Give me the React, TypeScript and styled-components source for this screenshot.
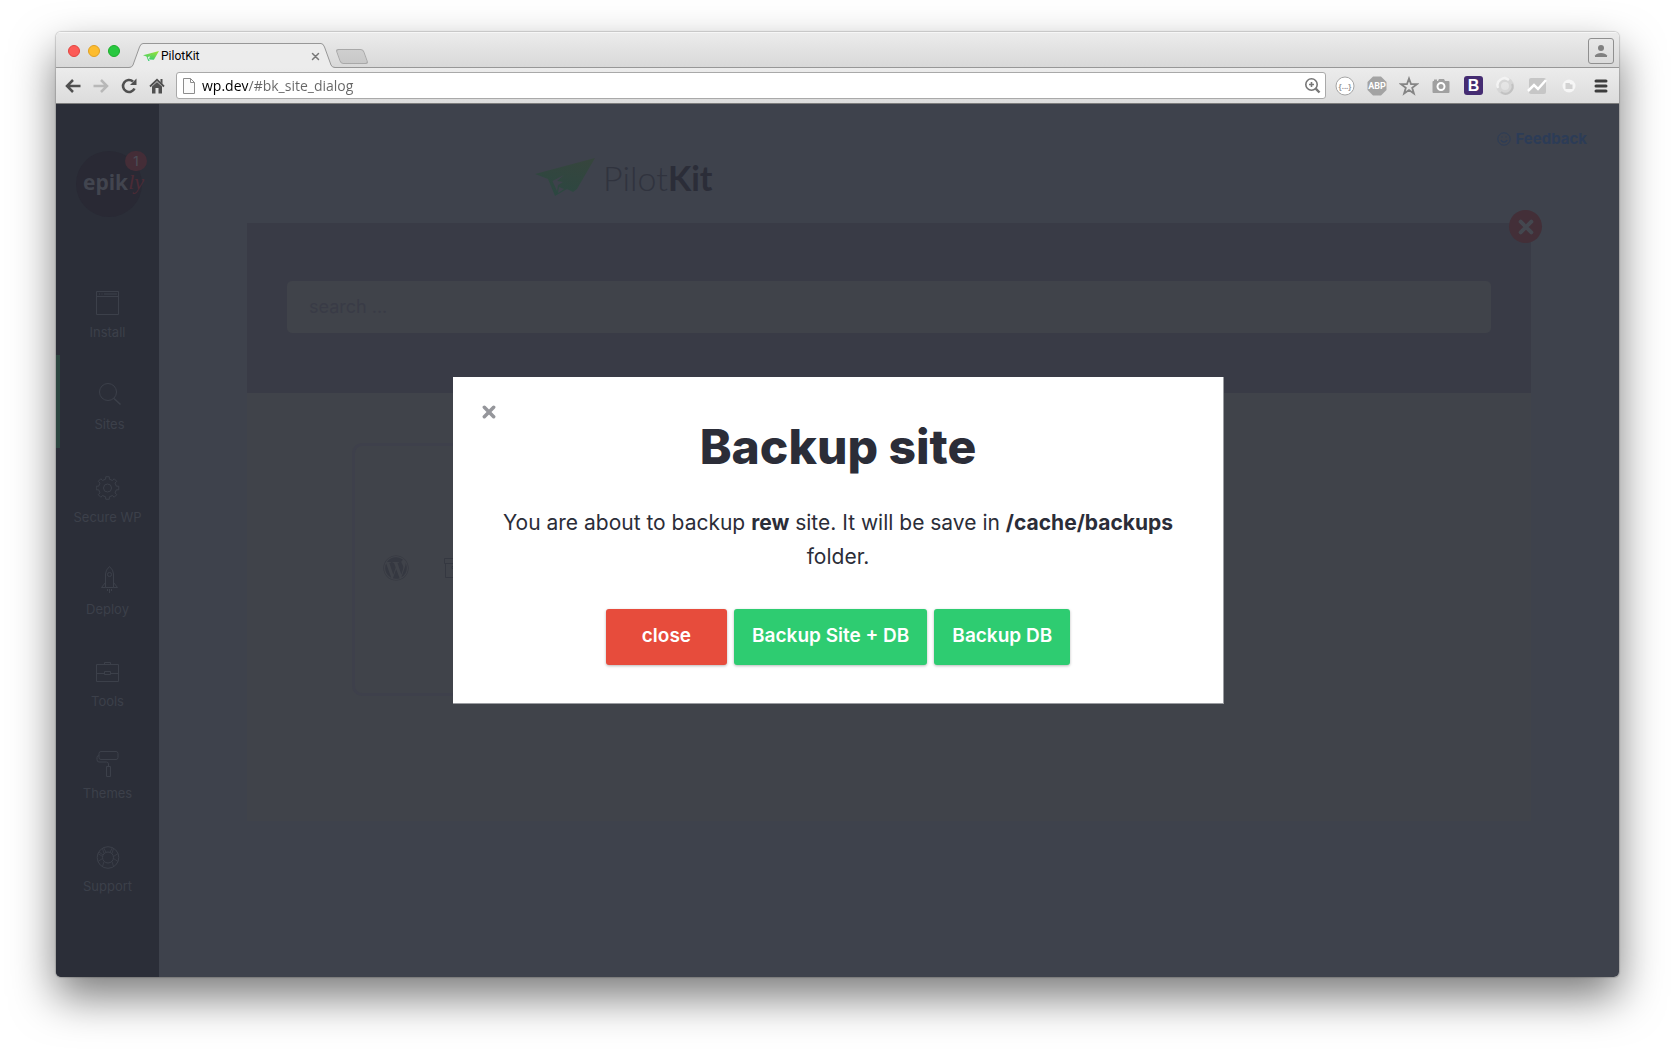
import React from "react";
import styled, { createGlobalStyle, css } from "styled-components";
import { FaWordpress } from "react-icons/fa";

const sans = `Inter, "Liberation Sans", sans-serif`;
const chrome = `Roboto, "Noto Sans", sans-serif`;

const GlobalStyle = createGlobalStyle`
  * { box-sizing: border-box; }
  body { margin: 0; background: #fff; font-family: ${sans}; }
  button { font: inherit; border: 0; padding: 0; background: none; cursor: pointer; }
  svg { display: block; flex: none; }
`;

const Desktop = styled.div`
  min-height: 100vh;
  padding: 32px 56px 80px;
  display: flex;
  flex-direction: column;
  overflow: hidden;
`;

const Window = styled.div`
  flex: 1;
  display: flex;
  flex-direction: column;
  border-radius: 5px;
  overflow: hidden;
  box-shadow: 0 0 1px 1px rgba(0, 0, 0, 0.16), 0 20px 44px rgba(0, 0, 0, 0.52);
`;

/* Browser chrome */

const TabStrip = styled.header`
  height: 36px;
  display: flex;
  align-items: flex-end;
  padding: 0 5px 0 12px;
  background: linear-gradient(#ececec, #d8d8d8);
  box-shadow: inset 0 1px 0 #f6f6f6, inset 0 -1px 0 #979797;
`;

const Lights = styled.div`
  display: flex;
  align-self: center;
  gap: 8px;
  padding-top: 2px;
  margin-right: 9px;
`;

const Light = styled.button<{ $fill: string; $edge: string }>`
  width: 12px;
  height: 12px;
  border-radius: 50%;
  background: ${(p) => p.$fill};
  border: 1px solid ${(p) => p.$edge};
`;

const Tab = styled.div`
  display: flex;
  height: 25px;
`;

const TabBody = styled.div`
  width: 178px;
  display: flex;
  align-items: center;
  gap: 2px;
  background: #ececec;
  border-top: 1px solid #979797;
  font: 400 12px/14px ${chrome};
  color: #000;
`;

const TabTitle = styled.span`
  flex: 1;
`;

const TabClose = styled.button`
  width: 12px;
  height: 12px;
  display: grid;
  place-items: center;
`;

const NewTab = styled.button`
  width: 28px;
  height: 15px;
  margin: 0 auto 4px 3px;
  transform: skewX(20deg);
  border: 1px solid #a8a8a8;
  border-radius: 3px;
  background: linear-gradient(#cfcfcf, #c8c8c8);
`;

const Profile = styled.button`
  width: 26px;
  height: 26px;
  margin-bottom: 4px;
  display: grid;
  place-items: center;
  border: 1px solid #8f8f8f;
  border-radius: 3px;
`;

const Toolbar = styled.nav`
  height: 36px;
  display: flex;
  align-items: center;
  padding: 0 2px 0 3px;
  background: linear-gradient(#ececec, #dcdcdc);
  border-bottom: 1px solid #7d7d7d;
`;

const ToolButton = styled.button<{ $wide?: boolean }>`
  width: ${(p) => (p.$wide ? 32 : 28)}px;
  height: 28px;
  display: grid;
  place-items: center;
  flex: none;
`;

const AddressBar = styled.label`
  flex: 1;
  height: 27px;
  margin: 0 3px 0 5px;
  padding: 0 4px 0 6px;
  display: flex;
  align-items: center;
  gap: 7px;
  background: #fff;
  border: 1px solid #a9a9a9;
  border-radius: 3px;
`;

const Address = styled.input`
  flex: 1;
  min-width: 0;
  height: 20px;
  padding: 0;
  border: 0;
  outline: 0;
  font: 14px/20px "Open Sans", "Noto Sans", sans-serif;
  color: transparent;
  background: linear-gradient(90deg, #000 46px, #666 46px);
  background-clip: text;
  -webkit-background-clip: text;
`;

/* Page */

const Page = styled.div`
  position: relative;
  flex: 1;
  display: flex;
  background: #3e424c;
`;

const Sidebar = styled.aside`
  width: 103px;
  flex: none;
  background: #2b2e38;
`;

const Avatar = styled.div`
  position: relative;
  width: 66px;
  height: 66px;
  margin: 47px auto 46px 20px;
  border-radius: 50%;
  background: #292934;
  display: flex;
  align-items: center;
  padding: 0 0 4px 7px;
  font: 700 21px/30px "Open Sans", sans-serif;
  color: #42454f;
`;

const Script = styled.i`
  font: italic 22px/30px "Liberation Serif", serif;
  color: #4b2b36;
`;

const Badge = styled.span`
  position: absolute;
  top: 0;
  right: -5px;
  width: 22px;
  height: 20px;
  border-radius: 10px;
  background: #442d37;
  color: #4a4b55;
  font: 500 13px/20px ${sans};
  text-align: center;
`;

const Nav = styled.nav`
  height: 646px;
  display: flex;
  flex-direction: column;
`;

const NavItem = styled.a<{ $active?: boolean }>`
  flex: 1;
  padding: 24px 4px 0 0;
  border-left: 4px solid transparent;
  display: flex;
  flex-direction: column;
  align-items: center;
  gap: 6px;
  color: #3c404a;
  font: 400 13px/18px ${sans};
  text-decoration: none;
  ${(p) =>
    p.$active &&
    css`
      border-color: #2b453f;
      padding-right: 0;
    `}
`;

const Main = styled.main`
  flex: 1;
  min-width: 0;
  padding: 17px 88px 0;
  display: flex;
  flex-direction: column;
`;

const Feedback = styled.a`
  align-self: flex-end;
  margin-right: -56px;
  display: flex;
  align-items: center;
  gap: 4px;
  height: 36px;
  color: #2c3c57;
  font: 700 15px/20px ${sans};
  text-decoration: none;
`;

const Brand = styled.div`
  height: 66px;
  padding: 1px 0 0 288px;
  display: flex;
  align-items: flex-start;
  gap: 8px;
  font: 300 34px/40px Lato, sans-serif;
  color: #30333e;

  b {
    font-weight: 700;
    color: #2b2d38;
  }
`;

const Panel = styled.section`
  position: relative;
  min-height: 598px;
  background: #40434a;
`;

const PanelHead = styled.div`
  height: 170px;
  padding: 58px 40px 0;
  background: #393b46;
`;

const Search = styled.input`
  width: 100%;
  height: 52px;
  padding: 0 22px 2px;
  border: 0;
  border-radius: 5px;
  background: #40434a;
  font: 400 18px/24px ${sans};
  color: #3a3b46;

  &::placeholder {
    color: #393b46;
    opacity: 1;
  }
`;

const PanelClose = styled.button`
  position: absolute;
  top: -13px;
  right: -11px;
  width: 33px;
  height: 33px;
  border-radius: 50%;
  background: #432f38;
  display: grid;
  place-items: center;
`;

const SiteCard = styled.article`
  width: 360px;
  height: 253px;
  margin: 50px 0 0 105px;
  padding: 0 28px 4px;
  border: 3px solid #3e404b;
  border-radius: 10px;
  display: flex;
  align-items: center;
  gap: 35px;
  color: #353841;
`;

/* Dialog */

const DialogLayer = styled.div`
  position: absolute;
  inset: 0;
  display: flex;
  align-items: center;
  justify-content: center;
`;

const Dialog = styled.div`
  position: relative;
  width: 771px;
  max-width: 92%;
  margin-left: 2px;
  padding: 40px 40px 38px;
  background: #fff;
  border: solid #9a9ca0;
  border-width: 0 1px 1px 0;
  color: #2b2d38;
  text-align: center;
`;

const DialogClose = styled.button`
  position: absolute;
  top: 25px;
  left: 26px;
  width: 20px;
  height: 20px;
  display: grid;
  place-items: center;
`;

const Title = styled.h1`
  margin: 0 0 29px;
  font: 800 48px/60px ${sans};
`;

const Message = styled.p`
  margin: 0 0 35px;
  font: 400 21px/34px ${sans};
`;

const Actions = styled.div`
  display: flex;
  justify-content: center;
  gap: 7px;
`;

const Action = styled.button<{ $danger?: boolean }>`
  height: 56px;
  padding: 0 ${(p) => (p.$danger ? 36 : 18)}px 2px;
  border-radius: 3px;
  background: ${(p) => (p.$danger ? "#e74c3c" : "#2ecc71")};
  box-shadow: 0 1px 3px rgba(0, 0, 0, 0.28);
  color: #fff;
  font: 600 19px/24px ${sans};
`;

const Cross = ({ size, width, color }: { size: number; width: number; color: string }) => (
  <svg width={size} height={size} viewBox="0 0 12 12" fill="none" stroke={color} strokeWidth={width} strokeLinecap="round">
    <path d="M2 2l8 8M10 2l-8 8" />
  </svg>
);

const Plane = ({ size, id, from, to }: { size: number; id: string; from: string; to: string }) => (
  <svg width={size} height={(size * 38) / 60} viewBox="0 0 60 38" fill={`url(#${id})`}>
    <defs>
      <linearGradient id={id} x1="0.7" y1="0" x2="0.4" y2="1">
        <stop offset="0" stopColor={from} />
        <stop offset="1" stopColor={to} />
      </linearGradient>
    </defs>
    <path
      d="M60 0L0 16l13 5 7 17 12-7-4-2 10 5L42 31zM29 17L17.500 23l4.500 10 1-6 5-3-6-1zM24 29l-1 6 6-4z"
      fillRule="evenodd"
    />
  </svg>
);

const TabEdge = ({ flip }: { flip?: boolean }) => (
  <svg width="14" height="25" viewBox="0 0 14 25" transform={flip ? "scale(-1 1)" : undefined}>
    <path d="M0 25v-.5q3 0 4-2.500L10.500 4Q11.700.5 14 .5V25z" fill="#ececec" />
    <path d="M0 24.500q3 0 4-2.500L10.500 4Q11.700.5 14 .5" fill="none" stroke="#979797" />
  </svg>
);

const line = { fill: "none", stroke: "currentColor", strokeWidth: 1 } as const;

const InstallIcon = () => (
  <svg width="24" height="30" viewBox="0 0 24 30" {...line}>
    <path d="M.5 4.500h22v23H.5zM.5 9.500h22M3 7h1M5.500 7h1M8 7h13" />
  </svg>
);
const SitesIcon = () => (
  <svg width="24" height="30" viewBox="0 0 24 30" {...line}>
    <circle cx="10" cy="13" r="8.500" />
    <path d="M16 19.500L22.500 25.500" strokeWidth="1.500" />
  </svg>
);
const gear = Array.from({ length: 8 }, (_, i) => {
  const pt = (r: number, deg: number) => {
    const a = ((i * 45 + deg - 90) * Math.PI) / 180;
    return `${(11.5 + r * Math.cos(a)).toFixed(2)} ${(16 + r * Math.sin(a)).toFixed(2)}`;
  };
  return `${i ? "L" : "M"}${pt(9, -12)}L${pt(11.4, -9)}L${pt(11.4, 9)}L${pt(9, 12)}`;
}).join("") + "z";
const GearIcon = () => (
  <svg width="24" height="30" viewBox="0 0 24 30" {...line}>
    <path d={gear} strokeLinejoin="round" />
    <circle cx="11.500" cy="16" r="4" />
  </svg>
);
const RocketIcon = () => (
  <svg width="24" height="30" viewBox="-2 0 24 30" {...line}>
    <path d="M7.500 23.500V10q0-4 4-7.500Q15.500 6 15.500 10v13.500zM7.500 18.500l-4 5h4M15.500 18.500l4 5h-4M9.500 25v2M11.500 25v4M13.500 25v2" />
    <circle cx="11.500" cy="10.500" r="2" />
  </svg>
);
const ToolsIcon = () => (
  <svg width="24" height="30" viewBox="0 0 24 30" {...line}>
    <path d="M.5 8.500h22v17H.5zM8.500 8.500v-2h6v2M.5 17.500h8M14.500 17.500h8M8.500 15.500h6v3h-6z" />
  </svg>
);
const RollerIcon = () => (
  <svg width="24" height="30" viewBox="0 0 24 30" {...line}>
    <rect x="3" y="3.500" width="19" height="8" rx="2" />
    <path d="M3 7.500q-2 0-2 2v2q0 2.500 2 2.500h7.500q2 0 2 2V18M10.500 18.500h4v10h-4z" />
  </svg>
);
const SupportIcon = () => (
  <svg width="24" height="30" viewBox="0 -1 24 30" {...line}>
    <circle cx="12" cy="15.500" r="10.800" />
    <circle cx="12" cy="15.500" r="5.500" />
    <path d="M8 11.500L6.500 6.500M10 10.300L7.500 5.500M16 11.500l1.500-5M14 10.300L16.500 5.500M6.500 14.500L2 11.500M7 13L3 10M17.500 14.500l4.500-3M6.500 16.500L2 19.500M17.500 16.500l4.500 3M8 19.500l-1.500 5M16 19.500l1.500 5" strokeWidth=".8" />
  </svg>
);

const nav = [
  { label: "Install", icon: <InstallIcon /> },
  { label: "Sites", icon: <SitesIcon />, active: true },
  { label: "Secure WP", icon: <GearIcon /> },
  { label: "Deploy", icon: <RocketIcon /> },
  { label: "Tools", icon: <ToolsIcon /> },
  { label: "Themes", icon: <RollerIcon /> },
  { label: "Support", icon: <SupportIcon /> },
];

const textIcon = { textAnchor: "middle", fontFamily: "Liberation Sans, sans-serif", fontWeight: 700 } as const;

const extensions = [
  {
    label: "JSON viewer",
    icon: (
      <svg width="20" height="20" viewBox="0 0 20 20">
        <circle cx="10" cy="10" r="9" fill="#fff" stroke="#a5a5a5" />
        <text x="10" y="13" fontSize="8" fill="#999" {...textIcon}>{"{...}"}</text>
      </svg>
    ),
  },
  {
    label: "Ad blocker",
    icon: (
      <svg width="20" height="20" viewBox="0 0 20 20">
        <path d="M6 .5h8L19.500 6v8L14 19.500H6L.5 14V6z" fill="#a3a3a3" />
        <text x="10" y="13" fontSize="9" fill="#fff" textAnchor="middle" fontFamily="Roboto, sans-serif" fontWeight="700">ABP</text>
      </svg>
    ),
  },
  {
    label: "Bookmark",
    icon: (
      <svg width="20" height="20" viewBox="0 0 20 20" fill="none" stroke="#858585" strokeWidth="1.800">
        <path d="M10 2.500l2 5.600 5.900.1-4.700 3.600 1.700 5.700-4.900-3.400-4.900 3.400 1.700-5.700L2.100 8.200 8 8.100z" />
      </svg>
    ),
  },
  {
    label: "Screenshot",
    icon: (
      <svg width="18" height="16" viewBox="0 0 18 16">
        <path d="M1.500 3H2V1.500h3V3h1l1-2h5l1 2h3.500q1 0 1 1v10q0 1-1 1h-15q-1 0-1-1V4q0-1 1-1z" fill="#a0a0a0" />
        <circle cx="9" cy="8.500" r="3.500" fill="#a0a0a0" stroke="#fff" strokeWidth="2" />
      </svg>
    ),
  },
  {
    label: "Bootstrap",
    icon: (
      <svg width="19" height="19" viewBox="0 0 19 19">
        <rect width="19" height="19" rx="3" fill="#452c72" />
        <text x="9.500" y="15" fontSize="16" fill="#fff" {...textIcon}>B</text>
      </svg>
    ),
  },
  {
    label: "Sync",
    icon: (
      <svg width="20" height="20" viewBox="0 0 20 20" fill="none" strokeWidth="5">
        <circle cx="10" cy="10" r="6.500" stroke="#d6d6d6" />
        <path d="M3 12A7 7 0 0 1 14 4" stroke="#f3f3f3" strokeWidth="2.500" />
        <path d="M17 8A7 7 0 0 1 6 16" stroke="#c2c2c2" strokeWidth="2" />
      </svg>
    ),
  },
  {
    label: "Analytics",
    icon: (
      <svg width="20" height="18" viewBox="0 0 20 18">
        <rect x="2" y="1" width="17" height="16" rx="2" fill="#c6c6c6" />
        <path d="M1 14l6-6 4 4 8-9" fill="none" stroke="#fff" strokeWidth="2.500" />
      </svg>
    ),
  },
  {
    label: "Notes",
    icon: (
      <svg width="14" height="14" viewBox="0 0 14 14">
        <circle cx="7" cy="7" r="6.500" fill="#f6f6f6" />
        <path d="M3.500 4h4l1 1.500h2V10h-7z" fill="#d2d2d2" />
      </svg>
    ),
  },
  {
    label: "Menu",
    icon: (
      <svg width="14" height="14" viewBox="0 0 14 14" stroke="#3d3d3d" strokeWidth="3" strokeLinecap="round">
        <path d="M2 2h10M2 7h10M2 12h10" />
      </svg>
    ),
  },
];

export default function App() {
  return (
    <Desktop>
      <GlobalStyle />
      <Window>
        <TabStrip>
          <Lights>
            <Light aria-label="Close window" $fill="#fc5b57" $edge="#e2443f" />
            <Light aria-label="Minimize window" $fill="#fdbc2e" $edge="#e0a023" />
            <Light aria-label="Zoom window" $fill="#28c840" $edge="#1dad2b" />
          </Lights>
          <Tab>
            <TabEdge />
            <TabBody>
              <Plane size={16} id="plane-tab" from="#9be03c" to="#2ecc71" />
              <TabTitle>PilotKit</TabTitle>
              <TabClose aria-label="Close tab">
                <Cross size={9} width={2} color="#777" />
              </TabClose>
            </TabBody>
            <TabEdge flip />
          </Tab>
          <NewTab aria-label="New tab" />
          <Profile aria-label="Profile">
            <svg width="14" height="14" viewBox="0 0 14 14" fill="#808080">
              <circle cx="7" cy="4" r="3" />
              <path d="M1 13V11.500Q2.500 9 7 9t6 2.500V13z" />
            </svg>
          </Profile>
        </TabStrip>
        <Toolbar>
          <ToolButton aria-label="Back">
            <svg width="16" height="14" viewBox="0 0 16 14" fill="none" stroke="#505050" strokeWidth="2.500">
              <path d="M15.500 7H2.500M8 1L2 7l6 6" />
            </svg>
          </ToolButton>
          <ToolButton aria-label="Forward">
            <svg width="16" height="14" viewBox="0 0 16 14" fill="none" stroke="#b8b8b8" strokeWidth="2.500">
              <path d="M.5 7h13M8 1l6 6-6 6" />
            </svg>
          </ToolButton>
          <ToolButton aria-label="Reload">
            <svg width="16" height="16" viewBox="0 0 16 16">
              <path d="M13.500 10.500A6 6 0 1 1 12 3.500" fill="none" stroke="#505050" strokeWidth="2.600" />
              <path d="M15.500 .5V7H9z" fill="#505050" />
            </svg>
          </ToolButton>
          <ToolButton aria-label="Home">
            <svg width="16" height="16" viewBox="0 0 16 16" fill="#505050">
              <path d="M1 8.500L8 1.800l7 6.700" fill="none" stroke="#505050" strokeWidth="1.800" />
              <path d="M11.500 1H13.500V6l-2-2zM3 8.500L8 4l5 4.500V15.500H9.500V10h-3v5.500H3z" />
            </svg>
          </ToolButton>
          <AddressBar>
            <svg width="12" height="16" viewBox="0 0 12 16" fill="#fbfbfb" stroke="#8c8c8c">
              <path d="M.5.5h7l4 4v11H.5zM7.500.5v4h4" />
            </svg>
            <Address aria-label="Address" defaultValue="wp.dev/#bk_site_dialog" spellCheck={false} />
            <svg width="17" height="17" viewBox="0 0 17 17" fill="none" stroke="#777" strokeWidth="1.600">
              <circle cx="7.500" cy="7.500" r="5.700" />
              <path d="M7.500 5v5M5 7.500h5" />
              <path d="M11.700 11.700L15.500 15.500" strokeWidth="2.400" />
            </svg>
          </AddressBar>
          {extensions.map((e) => (
            <ToolButton key={e.label} aria-label={e.label} $wide>
              {e.icon}
            </ToolButton>
          ))}
        </Toolbar>
        <Page>
          <Sidebar>
            <Avatar>
              epik<Script>ly</Script>
              <Badge>1</Badge>
            </Avatar>
            <Nav>
              {nav.map((n) => (
                <NavItem key={n.label} href="#" $active={n.active}>
                  {n.icon}
                  {n.label}
                </NavItem>
              ))}
            </Nav>
          </Sidebar>
          <Main>
            <Feedback href="#">
              <svg width="14" height="14" viewBox="0 0 14 14" fill="none" stroke="currentColor">
                <circle cx="7" cy="7" r="6.200" />
                <path d="M3.800 8.200q3.200 4 6.400 0M5 4.500v1M9 4.500v1" strokeWidth="1.200" />
              </svg>
              Feedback
            </Feedback>
            <Brand>
              <Plane size={60} id="plane-brand" from="#36453d" to="#2c4741" />
              <span>
                Pilot<b>Kit</b>
              </span>
            </Brand>
            <Panel>
              <PanelHead>
                <Search aria-label="Search sites" placeholder="search ..." />
              </PanelHead>
              <PanelClose aria-label="Close panel">
                <Cross size={16} width={3} color="#44474f" />
              </PanelClose>
              <SiteCard>
                <FaWordpress size={26} />
                <svg width="24" height="22" viewBox="0 0 24 22" {...line}>
                  <path d="M.5 1.500h23v5H.5zM1.500 6.500h21v14h-21zM8 9.500h8v2H8z" />
                </svg>
              </SiteCard>
            </Panel>
          </Main>
          <DialogLayer>
            <Dialog role="dialog" aria-labelledby="dialog-title">
              <DialogClose aria-label="Close dialog">
                <Cross size={14} width={3} color="#95969b" />
              </DialogClose>
              <Title id="dialog-title">Backup site</Title>
              <Message>
                You are about to backup <b>rew</b> site. It will be save in <b>/cache/backups</b> folder.
              </Message>
              <Actions>
                <Action $danger>close</Action>
                <Action>Backup Site + DB</Action>
                <Action>Backup DB</Action>
              </Actions>
            </Dialog>
          </DialogLayer>
        </Page>
      </Window>
    </Desktop>
  );
}
